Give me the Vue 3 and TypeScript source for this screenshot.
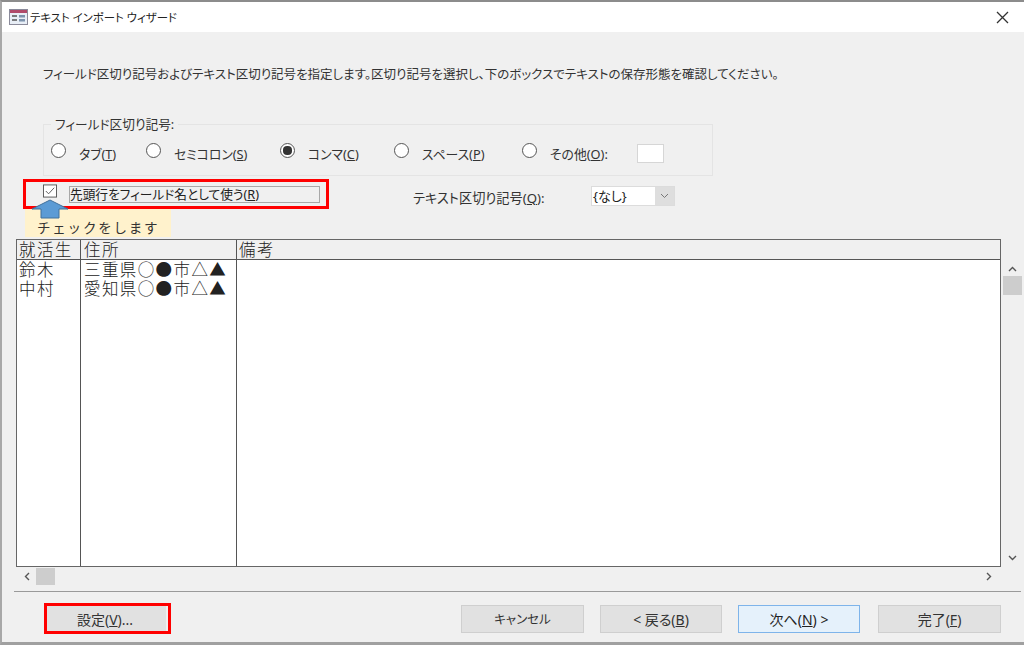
<script setup lang="ts">
interface Radio { label: string; key: string; checked?: boolean; width: number }
const radios: Radio[] = [
  { label: 'タブ', key: 'T', width: 95 },
  { label: 'セミコロン', key: 'S', width: 134 },
  { label: 'コンマ', key: 'C', width: 114 },
  { label: 'スペース', key: 'P', width: 128 },
  { label: 'その他', key: 'O', width: 116 },
]
radios[2].checked = true
const rows = [
  ['鈴木', '三重県○●市△▲'],
  ['中村', '愛知県○●市△▲'],
]
const buttons = [
  { pre: 'キャンセル', key: '', post: '', width: 123 },
  { pre: '< 戻る(', key: 'B', post: ')', width: 122 },
  { pre: '次へ(', key: 'N', post: ') >', width: 122, primary: true },
  { pre: '完了(', key: 'F', post: ')', width: 123 },
]
</script>

<template>
  <div class="window">
    <header class="titlebar">
      <svg class="appicon" width="19" height="16" viewBox="0 0 19 16">
        <rect x="0.5" y="0.5" width="18" height="15" fill="#e8eef6" stroke="#8a8a9a" />
        <rect x="1" y="1" width="17" height="3" fill="#b04a6a" />
        <path d="M3 7h5M3 11h5" stroke="#555" stroke-width="1.4" />
        <rect x="10" y="6" width="6" height="2.5" fill="#7d93ad" />
        <rect x="10" y="10" width="6" height="2.5" fill="#7d93ad" />
      </svg>
      <span class="title">テキスト インポート ウィザード</span>
      <svg class="close" width="13" height="13" viewBox="0 0 13 13">
        <path d="M1 1l11 11M12 1L1 12" stroke="#333" stroke-width="1.3" fill="none" />
      </svg>
    </header>

    <main class="body">
      <p class="intro">フィールド区切り記号およびテキスト区切り記号を指定します。区切り記号を選択し、下のボックスでテキストの保存形態を確認してください。</p>

      <fieldset class="group">
        <legend>フィールド区切り記号:</legend>
        <div class="radios">
          <label v-for="r in radios" :key="r.key" class="radio" :style="{ width: r.width + 'px' }">
            <span class="dot" :class="{ on: r.checked }"></span>
            <span class="rlabel">{{ r.label }}(<u>{{ r.key }}</u>)<template v-if="r.key === 'O'">:</template></span>
          </label>
          <span class="otherbox"></span>
        </div>
      </fieldset>

      <div class="options">
        <span class="check">
          <svg width="15" height="14" viewBox="0 0 15 14">
            <rect x="0.5" y="0.5" width="14" height="13" fill="#fff" stroke="#555" />
            <path d="M3 7l3 3 6-6.5" stroke="#555" stroke-width="1" fill="none" />
          </svg>
        </span>
        <span class="checklabel">先頭行をフィールド名として使う(<u>R</u>)</span>
        <span class="qualifier">テキスト区切り記号(<u>Q</u>):</span>
        <span class="combo">
          <span class="comboval">{なし}</span>
          <span class="comboarrow">
            <svg width="9" height="6" viewBox="0 0 9 6"><path d="M1 1l3.5 3.5L8 1" stroke="#777" fill="none" /></svg>
          </span>
        </span>
      </div>

      <div class="preview">
        <div class="tablewrap">
          <div class="thead">
            <span class="c1">就活生</span>
            <span class="c2">住所</span>
            <span class="c3">備考</span>
          </div>
          <div class="tbody">
            <div class="col c1">
              <div v-for="row in rows" :key="row[0]" class="cell">{{ row[0] }}</div>
            </div>
            <div class="col c2">
              <div v-for="row in rows" :key="row[1]" class="cell">{{ row[1] }}</div>
            </div>
            <div class="col c3"></div>
          </div>
        </div>
        <div class="vscroll">
          <svg width="9" height="6" viewBox="0 0 9 6"><path d="M1 5l3.5-3.5L8 5" stroke="#555" stroke-width="1.4" fill="none" /></svg>
          <span class="vthumb"></span>
          <span class="spacer"></span>
          <svg width="9" height="6" viewBox="0 0 9 6"><path d="M1 1l3.5 3.5L8 1" stroke="#555" stroke-width="1.4" fill="none" /></svg>
        </div>
      </div>

      <div class="hscroll">
        <svg width="6" height="9" viewBox="0 0 6 9"><path d="M5 1L1.5 4.5 5 8" stroke="#555" stroke-width="1.4" fill="none" /></svg>
        <span class="hthumb"></span>
        <span class="spacer"></span>
        <svg width="6" height="9" viewBox="0 0 6 9"><path d="M1 1l3.5 3.5L1 8" stroke="#555" stroke-width="1.4" fill="none" /></svg>
      </div>

      <div class="sep"></div>

      <footer class="footer">
        <button class="btn settings">設定(<u>V</u>)...</button>
        <button
          v-for="b in buttons"
          :key="b.pre"
          class="btn"
          :class="{ primary: b.primary, cancel: !b.key }"
          :style="{ width: b.width + 'px' }"
        >{{ b.pre }}<u v-if="b.key">{{ b.key }}</u>{{ b.post }}</button>
      </footer>
    </main>

    <div class="callout">チェックをします</div>
    <div class="redbox redcheck"></div>
    <div class="redbox redsettings"></div>
    <svg class="arrow" width="38" height="20" viewBox="0 0 38 20">
      <path d="M19 1L37 10H28V19H10V10H1Z" fill="#5b9bd5" stroke="#41719c" stroke-width="1" />
    </svg>
  </div>
</template>

<style>
html, body { margin: 0; padding: 0; background: #fff; }
</style>

<style scoped>
.window {
  position: relative;
  width: 1024px;
  height: 645px;
  box-sizing: border-box;
  border-top: 2px solid #8c8c8c;
  border-left: 2px solid #a8a8a8;
  border-bottom: 3px solid #a0a0a0;
  display: flex;
  flex-direction: column;
  overflow: hidden;
  background: #f0f0f0;
  color: #333;
  font-family: "Noto Sans", "Noto Sans CJK JP", sans-serif;
  font-size: 12.5px;
  font-feature-settings: "palt";
}
.titlebar {
  height: 30px;
  flex: none;
  background: #fff;
  display: flex;
  align-items: center;
  padding-left: 7px;
  padding-right: 15px;
}
.appicon { margin-right: 2px; }
.title { font-size: 11.4px; color: #222; flex: 1; }
.body { flex: 1; display: flex; flex-direction: column; min-height: 0; }
.intro {
  margin: 34px 0 0 41px;
  height: 18px;
  line-height: 18px;
  font-size: 12.5px;
  white-space: nowrap;
}
.group {
  margin: 32px 0 0 41px;
  width: 670px;
  height: 60px;
  box-sizing: border-box;
  border: 1px solid #e4e4e4;
  padding: 0;
  min-width: 0;
}
.group legend {
  margin-left: 7px;
  padding: 0 4px 0 4px;
  font-size: 12.7px;
  line-height: 16px;
}
.radios { display: flex; align-items: center; margin-top: 6px; padding-left: 7px; height: 30px; }
.radio { display: flex; align-items: center; font-size: 12.8px; }
.dot {
  width: 15px;
  height: 15px;
  box-sizing: border-box;
  border: 1.4px solid #555;
  border-radius: 50%;
  background: #fff;
  margin-right: 13px;
  margin-top: -5px;
  position: relative;
  flex: none;
}
.dot.on::after {
  content: "";
  position: absolute;
  inset: 2.4px;
  border-radius: 50%;
  background: #333;
}
.otherbox {
  width: 27px;
  height: 19px;
  box-sizing: border-box;
  background: #fff;
  border: 1px solid #d6d6d6;
  margin-left: -1px;
}
.options { display: flex; align-items: center; height: 30px; margin-top: 4px; }
.check { margin-left: 41px; display: flex; width: 14px; margin-top: -8px; }
.checklabel {
  margin-left: 12px;
  margin-top: -2px;
  width: 251px;
  height: 17px;
  box-sizing: border-box;
  border: 1px solid #a8a8a8;
  line-height: 15px;
  font-size: 12.7px;
  color: #222;
  white-space: nowrap;
}
.qualifier { margin-left: 93px; font-size: 13.2px; white-space: nowrap; width: 178px; margin-top: 4px; }
.combo {
  width: 84px;
  height: 20px;
  box-sizing: border-box;
  border: 1px solid #dcdcdc;
  background: #fff;
  display: flex;
  margin-top: 2px;
}
.comboval { flex: 1; font-size: 13px; line-height: 18px; padding-left: 1px; color: #222; }
.comboarrow {
  width: 19px;
  background: #dedede;
  display: flex;
  align-items: center;
  justify-content: center;
}
.preview { display: flex; margin-top: 29px; height: 328px; margin-left: 14px; }
.tablewrap {
  width: 985px;
  box-sizing: border-box;
  border: 1px solid #666;
  display: flex;
  flex-direction: column;
  background: #fff;
  font-family: "Noto Sans CJK JP", sans-serif;
  font-feature-settings: normal;
  font-size: 16.5px;
  letter-spacing: 1.4px;
  font-weight: 300;
  line-height: 18.5px;
  color: #222;
}
.thead { display: flex; height: 19px; background: #f0f0f0; border-bottom: 1px solid #555; flex: none; }
.tbody { display: flex; flex: 1; min-height: 0; }
.c1 { width: 64px; box-sizing: border-box; padding-left: 2px; border-right: 1px solid #555; flex: none; }
.c2 { width: 156px; box-sizing: border-box; padding-left: 3px; border-right: 1px solid #555; flex: none; white-space: nowrap; }
.c3 { flex: 1; padding-left: 2px; }
.vscroll {
  width: 20px;
  margin-left: 1px;
  display: flex;
  flex-direction: column;
  align-items: center;
  padding: 27px 0 6px;
  box-sizing: border-box;
}
.vthumb { width: 19px; height: 19px; background: #cdcdcd; margin-top: 4px; }
.spacer { flex: 1; }
.hscroll {
  height: 21px;
  margin: -1px 0 0 22px;
  width: 968px;
  display: flex;
  align-items: center;
}
.hthumb { width: 19px; height: 17px; background: #cdcdcd; margin-left: 6px; }
.sep { height: 1px; background: #9a9a9a; margin: 4px 0 0 12px; width: 1007px; flex: none; }
.footer { display: flex; align-items: center; margin: 12px 0 0 42px; height: 29px; gap: 16px; }
.btn {
  height: 28px;
  box-sizing: border-box;
  border: 1px solid #cfcfcf;
  background: #e1e1e1;
  color: #333;
  font-family: inherit;
  font-feature-settings: inherit;
  font-size: 14px;
  padding: 0;
  white-space: nowrap;
}
.btn.cancel { font-size: 12.5px; }
.btn:last-child { margin-left: 2px; }
.settings { width: 122px; margin-right: 279px; border: none; }
.primary { background: #e5f1fb; border-color: #7eb4ea; color: #222; }
.redbox { position: absolute; box-sizing: border-box; border: 3px solid #f00; pointer-events: none; }
.redcheck { left: 21px; top: 177px; width: 306px; height: 30px; }
.redsettings { left: 42px; top: 601px; width: 127px; height: 31px; }
.arrow { position: absolute; left: 29px; top: 197px; }
.callout {
  position: absolute;
  left: 23px;
  top: 207px;
  width: 146px;
  height: 28px;
  background: #fff2cc;
  font-size: 13.5px;
  letter-spacing: 1.8px;
  line-height: 24px;
  padding: 6px 0 0 12px;
  box-sizing: border-box;
  color: #333;
  font-family: "Noto Sans CJK JP", sans-serif;
  font-feature-settings: normal;
}
</style>
